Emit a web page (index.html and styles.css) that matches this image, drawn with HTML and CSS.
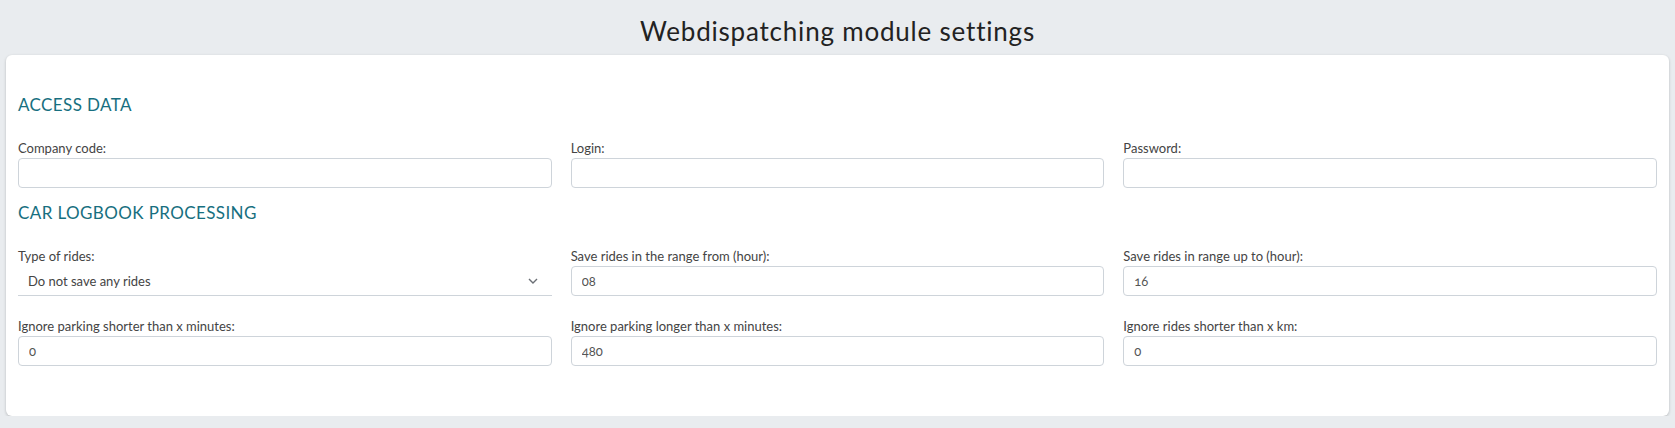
FILE: index.html
```html
<!DOCTYPE html>
<html lang="en">
<head>
<meta charset="utf-8">
<title>Webdispatching module settings</title>
<link rel="stylesheet" href="styles.css">
</head>
<body>
<h1 class="page-title">Webdispatching module settings</h1>
<div class="card">
  <section class="section">
    <h2 class="section-title">ACCESS DATA</h2>
    <div class="grid">
      <div class="field">
        <label class="label">Company code:</label>
        <input class="input" type="text" value="">
      </div>
      <div class="field">
        <label class="label">Login:</label>
        <input class="input" type="text" value="">
      </div>
      <div class="field">
        <label class="label">Password:</label>
        <input class="input" type="password" value="">
      </div>
    </div>
  </section>
  <section class="section section-second">
    <h2 class="section-title">CAR LOGBOOK PROCESSING</h2>
    <div class="grid">
      <div class="field">
        <label class="label">Type of rides:</label>
        <div class="select-wrap">
          <select class="select">
            <option>Do not save any rides</option>
          </select>
          <svg class="chevron" width="10" height="6" viewBox="0 0 10 6"><path d="M1 1l4 4 4-4" fill="none" stroke="#6b6f75" stroke-width="1.4"/></svg>
        </div>
      </div>
      <div class="field">
        <label class="label">Save rides in the range from (hour):</label>
        <input class="input" type="text" value="08">
      </div>
      <div class="field">
        <label class="label">Save rides in range up to (hour):</label>
        <input class="input" type="text" value="16">
      </div>
      <div class="field">
        <label class="label">Ignore parking shorter than x minutes:</label>
        <input class="input" type="text" value="0">
      </div>
      <div class="field">
        <label class="label">Ignore parking longer than x minutes:</label>
        <input class="input" type="text" value="480">
      </div>
      <div class="field">
        <label class="label">Ignore rides shorter than x km:</label>
        <input class="input" type="text" value="0">
      </div>
    </div>
  </section>
</div>
</body>
</html>
```

FILE: styles.css
```css
* { box-sizing: border-box; }
html, body {
  margin: 0;
  padding: 0;
  background: #e9ecef;
  font-family: Lato, "Open Sans", sans-serif;
  font-variant-numeric: oldstyle-nums;
}
.page-title {
  margin: 16px 0 9px;
  font-size: 26px;
  line-height: 30px;
  font-weight: 400;
  letter-spacing: 0.8px;
  text-align: center;
  color: #222;
}
.card {
  margin: 0 6px;
  background: #fff;
  border-radius: 6px;
  box-shadow: 0 1px 3px rgba(0,0,0,0.22);
  padding: 40px 12px 50px;
  height: 361px;
}
.section-title {
  margin: 0 0 25px;
  font-size: 17px;
  line-height: 20px;
  font-weight: 400;
  letter-spacing: 0.4px;
  color: #176f80;
}
.section-second { margin-top: 15px; }
.grid {
  display: grid;
  grid-template-columns: repeat(3, 1fr);
  column-gap: 19px;
  row-gap: 22px;
}
.field { display: flex; flex-direction: column; }
.label {
  font-size: 13px;
  line-height: 16px;
  color: #444;
  margin-bottom: 2px;
}
.input {
  height: 30px;
  border: 1px solid #ced4da;
  border-radius: 4px;
  padding: 0 10px;
  font-family: inherit;
  font-size: 13px;
  color: #555;
  background: #fff;
  outline: none;
  font-variant-numeric: oldstyle-nums;
}
.select-wrap { position: relative; }
.select {
  width: 100%;
  height: 30px;
  border: none;
  border-bottom: 1px solid #ced4da;
  border-radius: 0;
  padding: 0 10px;
  font-family: inherit;
  font-size: 13px;
  color: #444;
  background: #fff;
  appearance: none;
  -webkit-appearance: none;
  outline: none;
}
.chevron {
  position: absolute;
  right: 14px;
  top: 12px;
  pointer-events: none;
}
```
